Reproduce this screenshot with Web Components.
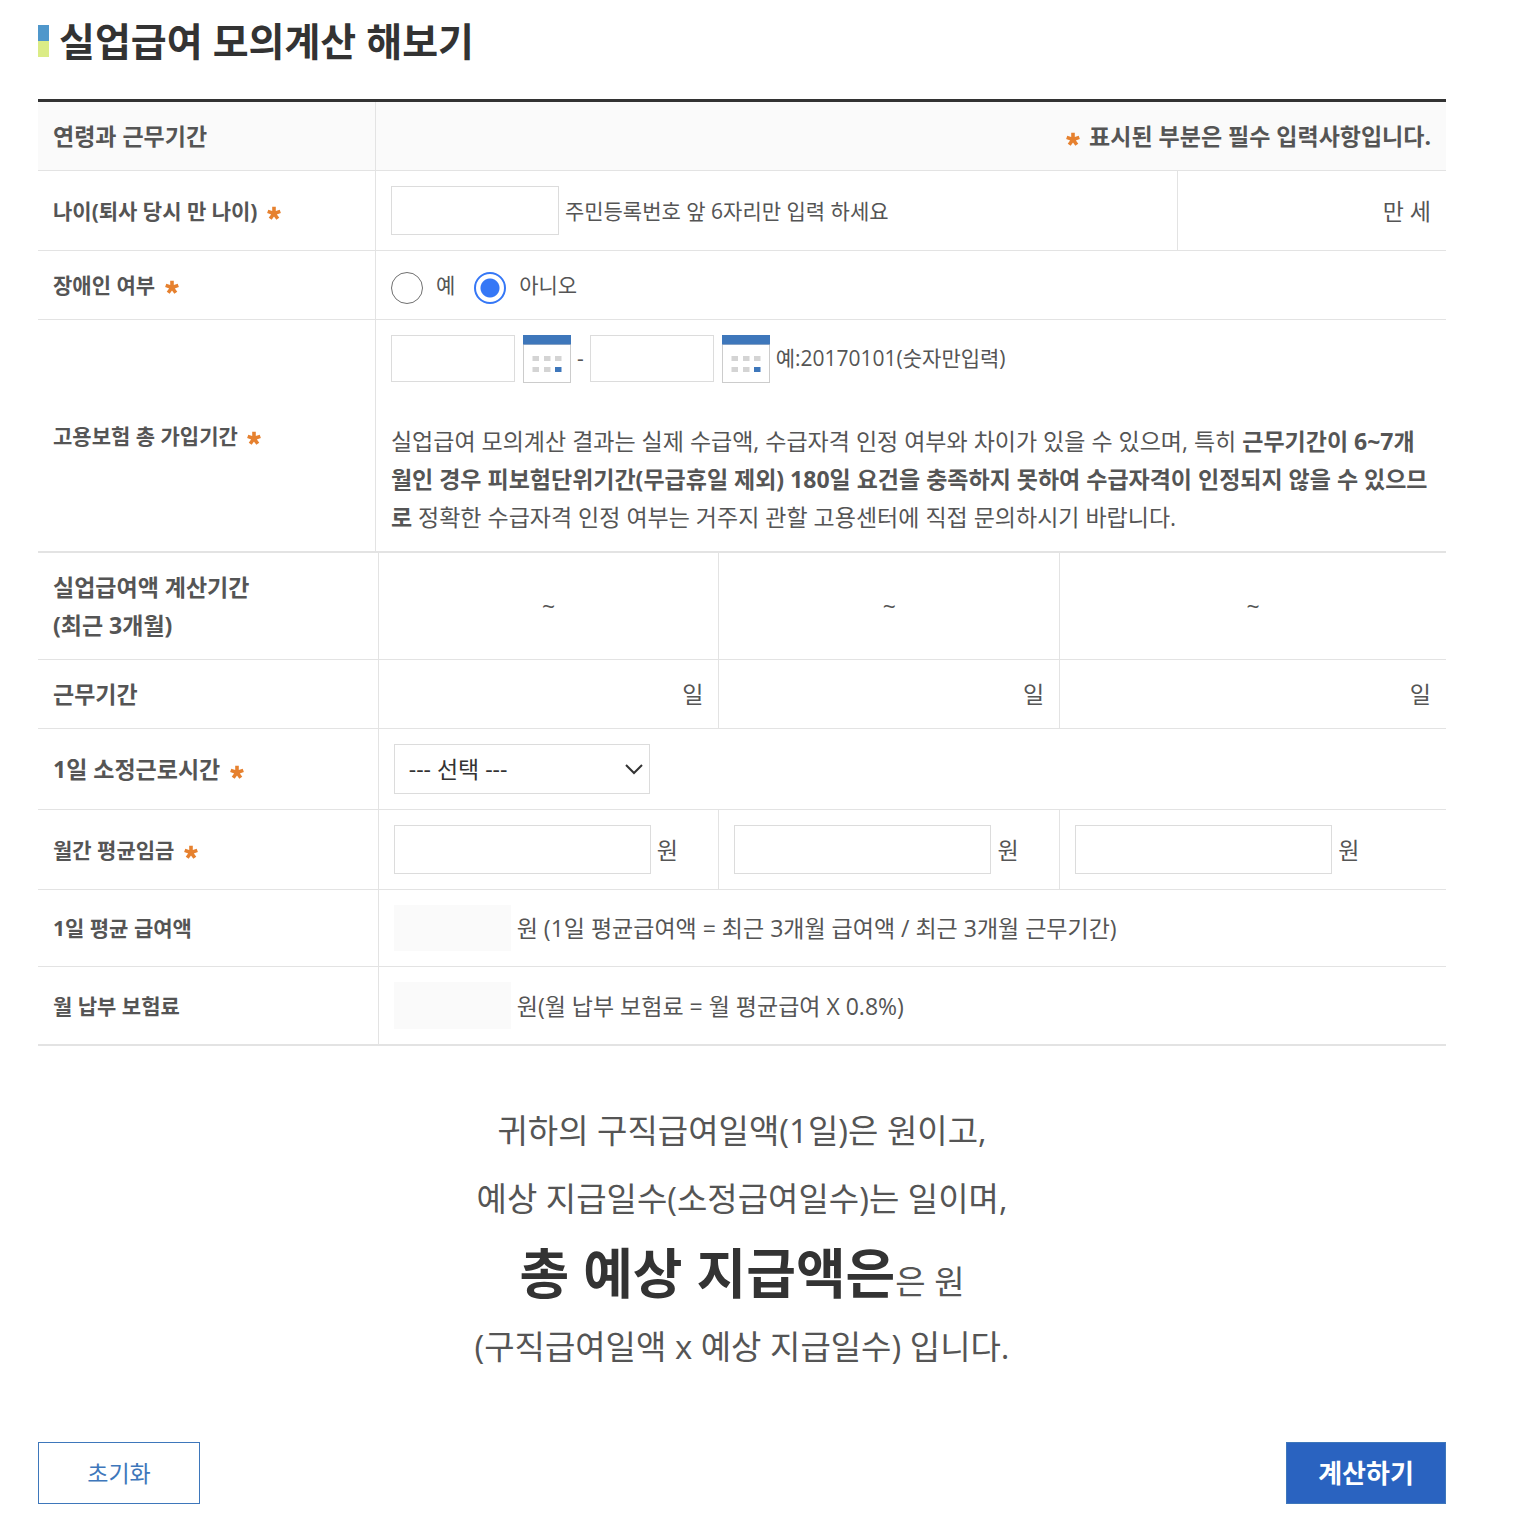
<!DOCTYPE html>
<html lang="ko">
<head>
<meta charset="UTF-8">
<meta name="viewport" content="width=device-width, initial-scale=1">
<title>실업급여 모의계산</title>
<style>
    body {
        margin: 0;
        background: #fff;
        color: #555;
        font-family: "Open Sans", "Noto Sans CJK KR", sans-serif;
        font-size: 23px;
        line-height: 38px;
        --line: #e3e3e3;
        --field-line: #dcdcdc;
        --blue: #3e77bb;
        --orange: #e6812f;
    }
</style>
</head>
<body>
<benefit-page>
    <section-title>실업급여 모의계산 해보기</section-title>
    <period-table></period-table>
    <wage-table></wage-table>
    <benefit-result></benefit-result>
    <action-bar>
        <action-button>초기화</action-button>
        <action-button kind="primary">계산하기</action-button>
    </action-bar>
</benefit-page>

<script>
// Shared by both tables
const tableStyle = `
    :host {
        display: block;
    }
    table {
        width: 100%;
        table-layout: fixed;
        border-collapse: separate;
        border-spacing: 0;
        border-bottom: 1px solid var(--line);
    }
    th, td {
        box-sizing: border-box;
        padding: 15px;
        text-align: left;
        vertical-align: middle;
        border-bottom: 1px solid var(--line);
        border-right: 1px solid var(--line);
    }
    th:last-child, td:last-child {
        border-right: 0;
    }
    th {
        font-weight: bold;
    }
    .small {
        font-size: 21px;
    }
    .right {
        text-align: right;
    }
    .center {
        text-align: center;
    }
`;

function define(name, html) {
    customElements.define(name, class extends HTMLElement {
        constructor() {
            super();
            this.attachShadow({ mode: "open" }).innerHTML = html;
        }
    });
}

define('benefit-page', `
    <style>
        :host {
            display: block;
            padding: 15px 70px 10px 38px;
        }
    </style>
    <slot></slot>
`);

define('section-title', `
    <style>
        :host {
            display: block;
            margin-bottom: 32px;
        }
        h1 {
            display: flex;
            align-items: center;
            gap: 10px;
            margin: 0;
            color: #333;
            font-size: 39px;
            line-height: 52px;
        }
        .bar {
            width: 11px;
            height: 32px;
            background: linear-gradient(#4f97cb 50%, #dbec86 50%);
        }
    </style>
    <h1><span class="bar"></span><slot></slot></h1>
`);

define('required-mark', `
    <style>
        :host {
            display: inline-block;
            margin: 0 3px 0 4px;
            vertical-align: -1px;
        }
        svg {
            display: block;
            fill: none;
            stroke: var(--orange);
        }
    </style>
    <svg width="14" height="14" viewBox="0 0 14 14" stroke-width="3.600" role="img" aria-label="필수">
        <path d="M7 7.500V.7M7 7.500L.7 5.400M7 7.500l6.300-2.100M7 7.500l-3.800 5.300M7 7.500l3.800 5.300"/>
    </svg>
`);

define('calendar-button', `
    <style>
        :host {
            display: block;
        }
        button {
            display: block;
            padding: 0;
            border: 0;
            background: none;
            cursor: pointer;
        }
        svg {
            display: block;
        }
    </style>
    <button type="button" aria-label="달력">
        <svg width="48" height="48" viewBox="0 0 48 48">
            <path fill="#ccc" d="M0 9h48v39H0z"/>
            <path fill="#fff" d="M1 10h46v37H1z"/>
            <path fill="#3e77bb" d="M0 0h48v9.500H0z"/>
            <path fill="#d4d4d4" d="M9.500 21h6.500v5H9.500zM21 21h6.500v5H21zM32 21h6.500v5H32zM9.500 32h6.500v5H9.500zM21 32h6.500v5H21z"/>
            <path fill="#3e77bb" d="M32 32h6.500v5H32z"/>
        </svg>
    </button>
`);

// Text box with the text that follows it
class EntryField extends HTMLElement {
    constructor() {
        super();
        this.attachShadow({ mode: "open" });

        const width = this.getAttribute('width') || '257px';
        const height = this.getAttribute('height') || '49px';
        const name = this.getAttribute('name') || '';
        const readonly = this.hasAttribute('readonly') ? 'readonly' : '';

        this.shadowRoot.innerHTML = `
            <style>
                :host {
                    display: block;
                }
                label {
                    display: flex;
                    align-items: center;
                    gap: 6px;
                }
                input {
                    box-sizing: border-box;
                    width: ${width};
                    height: ${height};
                    min-width: 0;
                    padding: 0 10px;
                    border: 1px solid var(--field-line);
                    border-radius: 0;
                    background: #fff;
                    color: #333;
                    font: inherit;
                }
                input[readonly] {
                    border-color: #fafafa;
                    background: #fafafa;
                }
            </style>
            <label><input type="text" aria-label="${name}" ${readonly}><slot></slot></label>
        `;
    }
}
customElements.define('entry-field', EntryField);

class RadioOption extends HTMLElement {
    constructor() {
        super();
        this.attachShadow({ mode: "open" }).innerHTML = `
            <style>
                :host {
                    display: block;
                }
                label {
                    display: flex;
                    align-items: center;
                    gap: 13px;
                }
                input {
                    appearance: none;
                    box-sizing: border-box;
                    width: 32px;
                    height: 32px;
                    margin: 6px 0 0;
                    border: 1px solid #707070;
                    border-radius: 50%;
                }
                input:checked {
                    border: 2px solid #3577f6;
                    background: radial-gradient(circle, #3577f6 9px, transparent 10px);
                }
            </style>
            <label><input type="radio"><slot></slot></label>
        `;
    }

    connectedCallback() {
        const input = this.shadowRoot.querySelector('input');
        input.checked = this.hasAttribute('checked');

        // Each input has its own shadow root, so clear the others by hand
        input.addEventListener('change', () => {
            this.parentNode.querySelectorAll('radio-option').forEach(option => {
                if (option !== this) option.shadowRoot.querySelector('input').checked = false;
            });
        });
    }
}
customElements.define('radio-option', RadioOption);

define('hours-select', `
    <style>
        :host {
            display: grid;
            width: 256px;
        }
        select, svg {
            grid-area: 1 / 1;
        }
        select {
            appearance: none;
            height: 50px;
            padding: 0 14px;
            border: 1px solid var(--field-line);
            border-radius: 0;
            background: #fff;
            color: #333;
            font: inherit;
        }
        svg {
            justify-self: end;
            align-self: center;
            margin-right: 7px;
            pointer-events: none;
        }
    </style>
    <select aria-label="1일 소정근로시간">
        <option>--- 선택 ---</option>
    </select>
    <svg width="18" height="11" viewBox="0 0 18 11" fill="none" stroke="#333" stroke-width="2">
        <path d="M1 1l8 8 8-8"/>
    </svg>
`);

define('period-table', `
    <style>
        ${tableStyle}
        table {
            border-top: 3px solid #333;
        }
        thead th {
            background: #fafafa;
        }
        .row {
            display: flex;
            align-items: center;
        }
        .radios {
            gap: 19px;
        }
        .dates {
            align-items: flex-start;
            gap: 6px;
            line-height: 46px;
        }
        .dates entry-field {
            margin-right: 2px;
        }
        p {
            margin: 39px 0 0;
        }
    </style>
    <table>
        <colgroup>
            <col style="width: 24%">
            <col>
            <col style="width: 19%">
        </colgroup>
        <thead>
            <tr>
                <th>연령과 근무기간</th>
                <th colspan="2" class="right"><required-mark></required-mark> 표시된 부분은 필수 입력사항입니다.</th>
            </tr>
        </thead>
        <tbody>
            <tr>
                <th class="small">나이(퇴사 당시 만 나이) <required-mark></required-mark></th>
                <td class="small"><entry-field width="168px" name="주민등록번호 앞 6자리">주민등록번호 앞 6자리만 입력 하세요</entry-field></td>
                <td class="right">만 세</td>
            </tr>
            <tr>
                <th class="small">장애인 여부 <required-mark></required-mark></th>
                <td colspan="2" class="small">
                    <div class="row radios">
                        <radio-option>예</radio-option>
                        <radio-option checked>아니오</radio-option>
                    </div>
                </td>
            </tr>
            <tr>
                <th class="small">고용보험 총 가입기간 <required-mark></required-mark></th>
                <td colspan="2">
                    <div class="row dates small">
                        <entry-field width="124px" height="47px" name="가입 시작일"></entry-field>
                        <calendar-button></calendar-button>
                        <span>-</span>
                        <entry-field width="124px" height="47px" name="가입 종료일"></entry-field>
                        <calendar-button></calendar-button>
                        <span>예:20170101(숫자만입력)</span>
                    </div>
                    <p>실업급여 모의계산 결과는 실제 수급액, 수급자격 인정 여부와 차이가 있을 수 있으며, 특히 <b>근무기간이 6~7개월인 경우 피보험단위기간(무급휴일 제외) 180일 요건을 충족하지 못하여 수급자격이 인정되지 않을 수 있으므로</b> 정확한 수급자격 인정 여부는 거주지 관할 고용센터에 직접 문의하시기 바랍니다.</p>
                </td>
            </tr>
        </tbody>
    </table>
`);

define('wage-table', `
    <style>
        ${tableStyle}
    </style>
    <table>
        <colgroup>
            <col style="width: 24.2%">
            <col style="width: 24.2%">
            <col style="width: 24.2%">
            <col>
        </colgroup>
        <tbody>
            <tr>
                <th>실업급여액 계산기간<br>(최근 3개월)</th>
                <td class="center">~</td>
                <td class="center">~</td>
                <td class="center">~</td>
            </tr>
            <tr>
                <th>근무기간</th>
                <td class="right">일</td>
                <td class="right">일</td>
                <td class="right">일</td>
            </tr>
            <tr>
                <th>1일 소정근로시간 <required-mark></required-mark></th>
                <td colspan="3"><hours-select></hours-select></td>
            </tr>
            <tr>
                <th class="small">월간 평균임금 <required-mark></required-mark></th>
                <td><entry-field name="첫째 달 임금">원</entry-field></td>
                <td><entry-field name="둘째 달 임금">원</entry-field></td>
                <td><entry-field name="셋째 달 임금">원</entry-field></td>
            </tr>
            <tr>
                <th class="small">1일 평균 급여액</th>
                <td colspan="3"><entry-field width="117px" height="46px" name="1일 평균 급여액" readonly>원 (1일 평균급여액 = 최근 3개월 급여액 / 최근 3개월 근무기간)</entry-field></td>
            </tr>
            <tr>
                <th class="small">월 납부 보험료</th>
                <td colspan="3"><entry-field width="117px" height="47px" name="월 납부 보험료" readonly>원(월 납부 보험료 = 월 평균급여 X 0.8%)</entry-field></td>
            </tr>
        </tbody>
    </table>
`);

define('benefit-result', `
    <style>
        :host {
            display: block;
            margin: 51px 0 61px;
            text-align: center;
            font-size: 33px;
            line-height: 68px;
        }
        p {
            margin: 0;
        }
        .total {
            line-height: 33px;
        }
        strong {
            color: #333;
            font-size: 54px;
            line-height: 80px;
        }
    </style>
    <p>귀하의 구직급여일액(1일)은 원이고,</p>
    <p>예상 지급일수(소정급여일수)는 일이며,</p>
    <p class="total"><strong>총 예상 지급액은</strong>은 원</p>
    <p>(구직급여일액 x 예상 지급일수) 입니다.</p>
`);

define('action-bar', `
    <style>
        :host {
            display: flex;
            justify-content: space-between;
        }
    </style>
    <slot></slot>
`);

define('action-button', `
    <style>
        :host {
            display: block;
        }
        button {
            box-sizing: border-box;
            min-width: 162px;
            height: 62px;
            padding: 0 31px;
            border: 1px solid var(--blue);
            background: #fff;
            color: var(--blue);
            font: inherit;
            cursor: pointer;
        }
        :host([kind="primary"]) button {
            min-width: 160px;
            background: #2a63c0;
            color: #fff;
            font-size: 26px;
            font-weight: bold;
        }
    </style>
    <button type="button"><slot></slot></button>
`);
</script>
</body>
</html>
